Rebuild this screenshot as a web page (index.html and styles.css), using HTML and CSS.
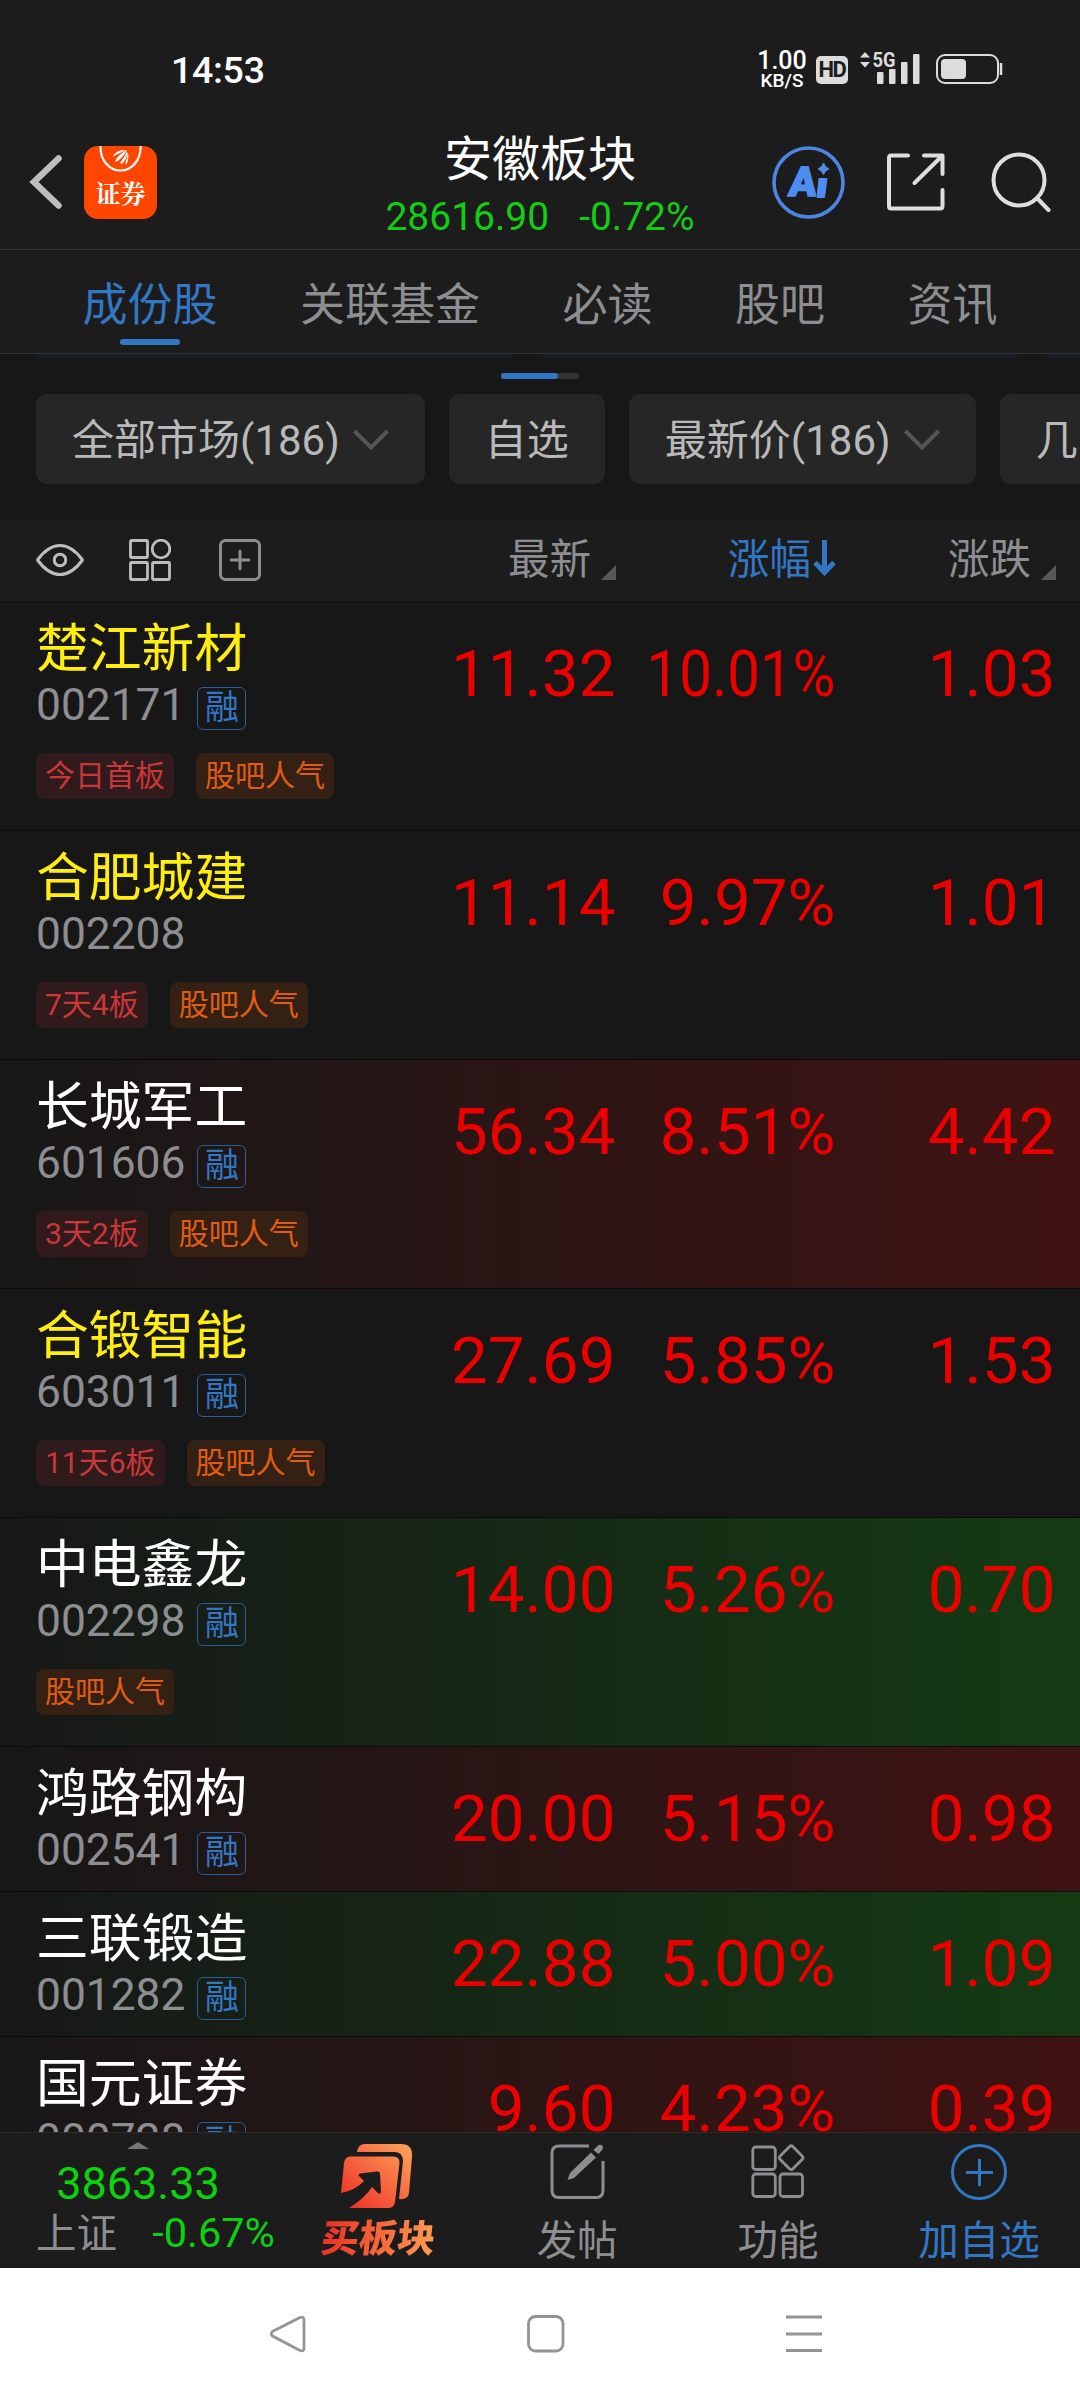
FILE: index.html
```html
<!DOCTYPE html>
<html lang="zh-CN">
<head>
<meta charset="utf-8">
<title>安徽板块</title>
<link rel="stylesheet" href="styles.css">
</head>
<body>
<div class="phone">
  <header class="top">
    <div class="status">
      <span class="clock">14:53</span>
      <div class="status-right">
        <div class="speed"><b>1.00</b><i>KB/S</i></div>
        <span class="hd">HD</span>
        <svg class="signal" width="62" height="34" viewBox="0 0 62 34" fill="#dcdcdc">
          <path d="M1 7.500 6 2 11 7.500zM1 12 6 17.500 11 12z"/>
          <text class="g5" x="13.500" y="17" textLength="23" lengthAdjust="spacingAndGlyphs">5G</text>
          <rect x="18" y="22" width="6.500" height="12" rx="1"/><rect x="30" y="19" width="6.500" height="15" rx="1"/><rect x="42" y="12" width="6.500" height="22" rx="1"/><rect x="54" y="4" width="6.500" height="30" rx="1"/>
        </svg>
        <svg class="battery" width="68" height="30" viewBox="0 0 68 30">
          <rect x="1" y="1" width="61" height="28" rx="8" fill="none" stroke="#dcdcdc" stroke-width="2"/>
          <rect x="5" y="5" width="25" height="20" rx="4" fill="#dcdcdc"/><path d="M65 9v12" stroke="#dcdcdc" stroke-width="2.500"/>
        </svg>
      </div>
    </div>
    <div class="titlebar">
      <div class="title-left">
        <svg width="34" height="56" viewBox="0 0 34 56"><path d="M29.500 4.500 5 28l24.500 23.500" fill="none" stroke="#bebebe" stroke-width="6.500" stroke-linecap="round"/></svg>
        <svg class="logo" width="73" height="73" viewBox="0 0 73 73">
          <rect width="73" height="73" rx="14" fill="#ff4600"/>
          <path d="M16.500 0C16 14 25 24.500 36.500 24.500S57 14 56.500 0" fill="none" stroke="#fff" stroke-width="2.200"/>
          <path d="M28 11Q33 3 42 4Q34 8 28 11zM31 15Q35 8 43 4Q39 12 32 16zM36 17Q41 11 43 5Q44 12 38 18zM41 18Q44 12 43.500 6Q46 12 42 19z" fill="#fff"/>
          <text class="logo-text" x="36.500" y="57" text-anchor="middle">证券</text>
        </svg>
      </div>
      <div class="title-mid">
        <h1>安徽板块</h1>
        <p><span>28616.90</span><span>-0.72%</span></p>
      </div>
      <div class="title-right">
        <svg width="73" height="73" viewBox="0 0 73 73">
          <circle cx="36.500" cy="36.500" r="34.500" fill="none" stroke="#4c86e4" stroke-width="3.600"/>
          <text class="ai" x="21" y="50" transform="skewX(-6)">A</text>
          <path fill="#4f8cf0" stroke="#4f8cf0" stroke-linejoin="round" d="M47 32.500H55L52.500 51.500H45zM51.500 17Q53 21.500 57 23Q53 24.500 51.500 28.500Q50 24.500 46 23Q50 21.500 51.500 17z"/>
        </svg>
        <svg width="58" height="58" viewBox="0 0 58 58" fill="none" stroke="#dedede" stroke-width="4" stroke-linecap="round" stroke-linejoin="round"><path d="M21 2.500H4Q2 2.500 2 5V53Q2 55.500 4 55.500H53Q55.500 55.500 55.500 53V37M37 2.500H55.500V21M55 3 27.500 30"/></svg>
        <svg width="60" height="60" viewBox="0 0 60 60" fill="none" stroke="#dedede" stroke-width="4" stroke-linecap="round"><circle cx="28" cy="28" r="25.500"/><path d="M46 46 57.500 58"/></svg>
      </div>
    </div>
  </header>
  <nav class="tabs"><a class="on">成份股</a><a>关联基金</a><a>必读</a><a>股吧</a><a>资讯</a></nav>
  <div class="pager">
    <div class="peek"><i></i><i></i><i></i></div>
    <div class="track"><i></i></div>
  </div>
  <div class="chips">
    <button>全部市场(186)<svg width="36" height="22" viewBox="0 0 36 22"><path d="M1.500 2 18 18.500 34.500 2"/></svg></button>
    <button>自选</button>
    <button>最新价(186)<svg width="36" height="22" viewBox="0 0 36 22"><path d="M1.500 2 18 18.500 34.500 2"/></svg></button>
    <button class="more">几</button>
  </div>
  <div class="thead">
    <div class="tools">
      <svg width="48" height="42" viewBox="0 0 48 42" fill="none" stroke="#bdbdbd" stroke-width="3"><path d="M1.500 21Q12 6.500 24 6.500T46.500 21Q36 35.500 24 35.500T1.500 21z" stroke-linejoin="round"/><circle cx="24" cy="21" r="5.800"/></svg>
      <svg width="42" height="42" viewBox="0 0 42 42" fill="none" stroke="#bdbdbd" stroke-width="2.800"><rect x="1.500" y="1.500" width="17" height="17" rx="1"/><circle cx="32" cy="10" r="8.800"/><rect x="1.500" y="23.500" width="17" height="17" rx="1"/><rect x="23.500" y="23.500" width="17" height="17" rx="1"/></svg>
      <svg width="42" height="42" viewBox="0 0 42 42" fill="none" stroke="#8d8d8d" stroke-width="3"><rect x="1.500" y="1.500" width="39" height="39" rx="5"/><path d="M11 21H31M21 11V31"/></svg>
    </div>
    <div class="th">最新<svg width="15" height="15" viewBox="0 0 15 15"><path d="M15 0V15H0z" fill="#59595b"/></svg></div>
    <div class="th sort">涨幅<svg width="23" height="36" viewBox="0 0 23 36" fill="none" stroke="#3277c4" stroke-width="5"><path d="M11.500 0V33M2 22.500 11.500 32.500 21 22.500"/></svg></div>
    <div class="th">涨跌<svg width="15" height="15" viewBox="0 0 15 15"><path d="M15 0V15H0z" fill="#59595b"/></svg></div>
  </div>
  <main class="list">
    <section class="row tall own"><div class="stock"><h2>楚江新材</h2><p>002171<em>融</em></p><div class="tags"><span>今日首板</span><span class="hot">股吧人气</span></div></div><b>11.32</b><b class="squeeze"><span>10.01%</span></b><b>1.03</b></section>
    <section class="row tall own"><div class="stock"><h2>合肥城建</h2><p>002208</p><div class="tags"><span>7天4板</span><span class="hot">股吧人气</span></div></div><b>11.14</b><b>9.97%</b><b>1.01</b></section>
    <section class="row tall up"><div class="stock"><h2>长城军工</h2><p>601606<em>融</em></p><div class="tags"><span>3天2板</span><span class="hot">股吧人气</span></div></div><b>56.34</b><b>8.51%</b><b>4.42</b></section>
    <section class="row tall own"><div class="stock"><h2>合锻智能</h2><p>603011<em>融</em></p><div class="tags"><span>11天6板</span><span class="hot">股吧人气</span></div></div><b>27.69</b><b>5.85%</b><b>1.53</b></section>
    <section class="row tall down"><div class="stock"><h2>中电鑫龙</h2><p>002298<em>融</em></p><div class="tags"><span class="hot">股吧人气</span></div></div><b>14.00</b><b>5.26%</b><b>0.70</b></section>
    <section class="row up"><div class="stock"><h2>鸿路钢构</h2><p>002541<em>融</em></p></div><b>20.00</b><b>5.15%</b><b>0.98</b></section>
    <section class="row down"><div class="stock"><h2>三联锻造</h2><p>001282<em>融</em></p></div><b>22.88</b><b>5.00%</b><b>1.09</b></section>
    <section class="row up"><div class="stock"><h2>国元证券</h2><p>000728<em>融</em></p></div><b>9.60</b><b>4.23%</b><b>0.39</b></section>
  </main>
  <footer class="bar">
    <div class="index">
      <svg width="22" height="7" viewBox="0 0 22 7"><path d="M11 0 22 7H0z" fill="#77777a"/></svg>
      <strong>3863.33</strong>
      <p><span>上证</span><b>-0.67%</b></p>
    </div>
    <div class="item buy">
      <svg width="72" height="66" viewBox="0 0 72 66">
        <defs><linearGradient id="g" x1="0" y1="1" x2="1" y2="0"><stop offset="0" stop-color="#ee2a24"/><stop offset="1" stop-color="#ffa45c"/></linearGradient></defs>
        <path fill="url(#g)" d="M16 8Q17 0 24 0H60Q72 0 71 13L68 49Q67 56 58 55L62 17Q62 8 53 8zM9 12.500H52Q59 12.500 58.500 19L54 58Q53 64 47 64H8Q24 54 31 43L37 49Q40 51 40 47L39 30Q39 27 36 27.500L19 29.500Q16 30.500 19 33L23 37Q15 46 0 49L3 19Q4 12.500 9 12.500z"/>
      </svg>
      <span>买板块</span>
    </div>
    <div class="item">
      <svg width="55" height="56" viewBox="0 0 55 56" fill="none" stroke="#8e8e92" stroke-width="3"><path d="M39 2H9Q2 2 2 9V46Q2 53.500 9 53.500H46Q53 53.500 53 46V17"/><path d="M41 8.500 46 13.500 24 34 17.500 36 20 29zM43.500 6 48 1.500Q50 0 52 1.500T52 6L48.500 10z" fill="#8e8e92" stroke="none"/></svg>
      <span>发帖</span>
    </div>
    <div class="item">
      <svg width="54" height="56" viewBox="0 0 54 56" fill="none" stroke="#8e8e92" stroke-width="2.800"><rect x="1.800" y="3" width="22.500" height="22.500" rx="3"/><rect x="1.800" y="30" width="22.500" height="22.500" rx="3"/><rect x="29" y="30" width="22.500" height="22.500" rx="3"/><rect x="31.200" y="4.700" width="18" height="18" rx="2.500" transform="rotate(45 40.200 13.700)"/></svg>
      <span>功能</span>
    </div>
    <div class="item add">
      <svg width="56" height="56" viewBox="0 0 56 56" fill="none" stroke="#3277c4" stroke-width="3"><circle cx="28" cy="28" r="26.500"/><path d="M15 28.500H42M28.500 15V42"/></svg>
      <span>加自选</span>
    </div>
  </footer>
  <div class="sysnav">
    <svg width="38" height="38" viewBox="0 0 38 38"><path d="M31 2.500 3.500 16.500Q1 18.500 3.500 21L31 35.500Q35 37 35 33V5Q35 1 31 2.500z"/></svg>
    <svg width="38" height="38" viewBox="0 0 38 38"><rect x="1.500" y="1.500" width="34.500" height="34.500" rx="7"/></svg>
    <svg width="38" height="38" viewBox="0 0 38 38"><path d="M1 2H37M1 19H37M1 35.500H37"/></svg>
  </div>
</div>
</body>
</html>
```
FILE: styles.css
```css
* { box-sizing: border-box; margin: 0; padding: 0; }
body { background: #171717; font-family: Roboto, "Noto Sans CJK SC", sans-serif; }
svg { display: block; flex: none; }
i, em { font-style: normal; }
h1, h2, b, strong { font-weight: 400; }
.phone { width: 1080px; height: 2400px; display: flex; flex-direction: column; overflow: hidden; color: #fff; background: #171717; }

.top { height: 250px; background: #1c1c1c; border-bottom: 1px solid #333; }
.status { height: 120px; padding: 50px 76px 0 171px; display: flex; justify-content: space-between; }
.clock { font-size: 37.500px; font-weight: 500; line-height: 40px; letter-spacing: -.3px; }
.status-right { display: flex; }
.speed { width: 50px; display: flex; flex-direction: column; align-items: center; margin-right: 9px; }
.speed b { font-size: 25px; line-height: 22px; font-weight: 500; }
.speed i { font-size: 19px; line-height: 18px; font-weight: 500; }
.hd { width: 32px; height: 28px; margin: 6px 11px 0 0; border-radius: 5px; background: #dcdcdc; color: #1c1c1c; font-size: 22px; line-height: 28px; font-weight: 700; text-align: center; letter-spacing: -1.500px; }
.signal { margin-right: 15px; }
.g5 { font-size: 21px; font-weight: 700; }
.battery { margin-top: 4px; }

.titlebar { height: 129px; display: grid; grid-template-columns: 340px 1fr 340px; }
.title-left { display: flex; align-items: center; gap: 21px; padding: 0 0 5px 29px; }
.logo-text { font: 700 25px "Noto Serif CJK SC", "Noto Sans CJK SC", serif; fill: #fff; }
.title-mid { display: flex; flex-direction: column; align-items: center; padding-top: 12px; }
.title-mid h1 { font-size: 48px; line-height: 56px; }
.title-mid p { display: flex; gap: 30px; font-size: 39px; line-height: 44px; margin-top: 7px; color: #14cc14; }
.title-right { display: flex; align-items: center; padding: 0 0 5px 32px; }
.title-right svg + svg { margin-left: 42px; }
.title-right svg + svg + svg { margin-left: 46px; }
.ai { font-size: 41px; font-weight: 900; fill: #4f8cf0; stroke: #4f8cf0; stroke-width: 1.500px; }

.tabs { height: 104px; display: flex; gap: 82.500px; padding-left: 82.500px; background: #1c1c1c; border-bottom: 1px solid #333; font-size: 45px; line-height: 111px; color: #8e8e92; }
.tabs .on { color: #3277c4; display: flex; flex-direction: column; align-items: center; }
.tabs .on::after { content: ""; width: 60px; height: 6px; margin-top: -22px; border-radius: 3px; background: #3277c4; }

.pager { height: 40px; display: flex; flex-direction: column; align-items: center; }
.peek { align-self: stretch; height: 4px; display: flex; gap: 30px; padding-left: 37px; overflow: hidden; }
.peek i { flex: none; width: 475px; height: 4px; border-radius: 0 0 12px 12px; background: #191d25; }
.track { width: 78px; height: 6px; margin-top: 15px; border-radius: 3px; background: #333; }
.track i { display: block; width: 57px; height: 6px; border-radius: 3px; background: #3277c4; }

.chips { height: 126px; display: flex; gap: 24px; padding-left: 36px; overflow: hidden; }
.chips button { flex: none; height: 90px; display: flex; align-items: center; gap: 13px; padding: 3px 36px 0; border: 0; border-radius: 11px; background: #262626; color: #b9b9b9; font: inherit; font-size: 42px; line-height: 87px; }
.chips .more { width: 240px; }
.chips svg { margin-top: -2px; }
.chips path { fill: none; stroke: #555; stroke-width: 4; }

.thead { height: 82px; display: grid; grid-template-columns: 396px 220px 220px 220px; align-items: center; background: #1c1c1c; border-bottom: 1px solid #111; font-size: 41.500px; color: #8e8e92; }
.tools { display: flex; gap: 45px; padding: 0 0 2px 36px; }
.tools svg:last-child { margin-left: 3px; }
.th { display: flex; justify-content: flex-end; align-items: flex-end; gap: 10px; padding-bottom: 1px; line-height: 40px; }
.th.sort { color: #3277c4; gap: 2px; }
.th.sort svg { margin-bottom: 4px; }

.list { height: 1530px; overflow: hidden; }
.row { height: 145px; display: grid; grid-template-columns: 396px 219.500px 220px 220px; border-bottom: 1px solid #0c0c0c; background: #171717; }
.row.tall { height: 229px; }
.row.up { background: linear-gradient(90deg, #171717, #3f1312); }
.row.down { background: linear-gradient(90deg, #171717, #143b14); }
.row > b { font-size: 65.500px; line-height: 76px; padding-top: 34px; text-align: right; color: #eb0000; white-space: nowrap; }
.squeeze { display: flex; justify-content: flex-end; }
.squeeze span { transform: scaleX(.89); transform-origin: right; }
.stock { padding: 16px 0 0 36px; }
.stock h2 { font-size: 52.800px; line-height: 62px; }
.own h2 { color: #ffee0f; }
.stock p { display: flex; align-items: flex-start; gap: 12px; height: 52px; margin-top: -1px; font-size: 44.300px; line-height: 52px; color: #8e8e92; }
.stock em { width: 49px; height: 43px; margin-top: 8px; border: 1.500px solid #285e9a; border-radius: 6px; font-size: 34px; line-height: 38px; text-align: center; color: #3277c4; }
.tags { display: flex; gap: 22px; margin-top: 22px; }
.tags span { height: 46px; padding: 0 9px; border-radius: 8px; background: #311a1b; color: #c83838; font-size: 30px; line-height: 45px; }
.tags .hot { background: #352014; color: #e05c14; }

.bar { height: 136px; display: grid; grid-template-columns: 276px repeat(4, 201px); background: #1c1c1c; border-top: 1px solid #2b2b2b; font-size: 40.500px; color: #8e8e92; }
.index { display: flex; flex-direction: column; align-items: center; padding: 9px 0 0; }
.index strong { font-size: 45px; line-height: 52px; margin-top: 9px; color: #0fd00f; }
.index b { font-size: 41.500px; line-height: 46px; color: #0fd00f; }
.index p { align-self: stretch; display: flex; justify-content: space-between; align-items: flex-start; padding: 0 1px 0 36px; line-height: 48px; }
.item { display: flex; flex-direction: column; align-items: center; padding: 11px 1px 0 0; }
.item span { line-height: 48px; margin-top: 17px; }
.add { color: #3277c4; }
.buy { padding-right: 0; }
.item.buy span { margin: 3px 0 0 3px; font-size: 38px; font-weight: 900; line-height: 52px; transform: skewX(-6deg); background: linear-gradient(90deg, #ea2f22, #ff9c52); background-clip: text; -webkit-background-clip: text; color: transparent; }

.sysnav { height: 132px; display: flex; justify-content: center; align-items: center; gap: 220px; padding-left: 12px; background: #fff; }
.sysnav svg { fill: none; stroke: #949494; stroke-width: 2.800; }
```
